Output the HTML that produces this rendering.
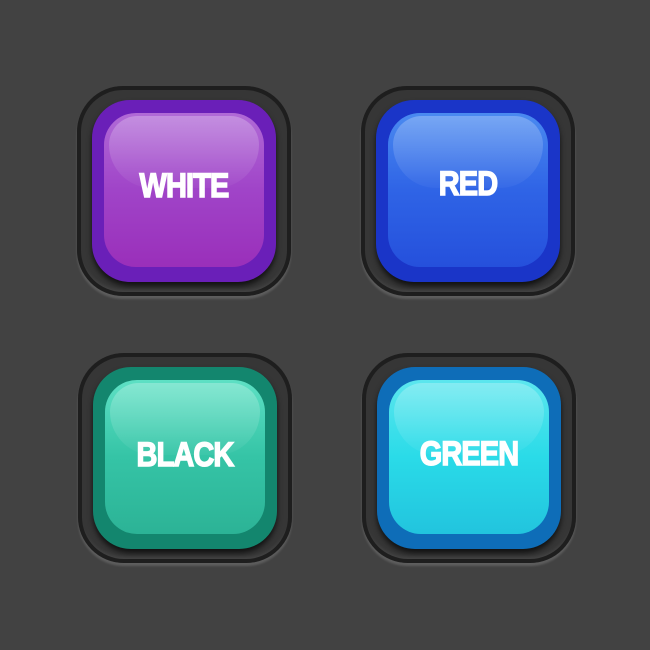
<!DOCTYPE html>
<html><head><style>
html,body{margin:0;padding:0}
body{width:650px;height:650px;background:#424242;position:relative;overflow:hidden;font-family:"Liberation Sans",sans-serif}
.h{position:absolute;width:214px;height:210px;border-radius:46px;background:#363636;box-shadow:inset 0 0 0 4px #1e1e1e,inset 0 -6px 4px rgba(255,255,255,.08),0 3px 2px rgba(255,255,255,.15)}
.b{position:absolute;left:15px;top:14px;width:184px;height:182px;border-radius:38px;box-shadow:0 4px 6px rgba(0,0,0,.7)}
.f{position:absolute;left:12px;top:13px;width:160px;height:154px;border-radius:32px}
.f:before{content:"";position:absolute;left:5px;top:3px;right:5px;height:72px;border-radius:30px 30px 45px 45px;background:linear-gradient(rgba(255,255,255,.25),rgba(255,255,255,.03))}
.t{position:absolute;left:0;right:0;top:56px;text-align:center;color:#fff;font-weight:bold;font-size:34px;letter-spacing:-1px;transform:scaleX(.85);-webkit-text-stroke:1.5px #fff}
</style></head><body>
<div class="h" style="left:77px;top:86px"><div class="b" style="background:#6a1fb8"><div class="f" style="background:linear-gradient(#b06ad6,#a044c8 50%,#9a2fba)"><div class="t" style="top:54px">WHITE</div></div></div></div>
<div class="h" style="left:361px;top:86px"><div class="b" style="background:#1a35c8"><div class="f" style="background:linear-gradient(#4a8af0,#2f64e6 50%,#2550dc)"><div class="t" style="top:52px">RED</div></div></div></div>
<div class="h" style="left:78px;top:353px"><div class="b" style="background:#13866e"><div class="f" style="background:linear-gradient(#5ee0c4,#35c4a6 50%,#2cb396)"><div class="t" style="top:56px">BLACK</div></div></div></div>
<div class="h" style="left:362px;top:353px"><div class="b" style="background:#0e6db8"><div class="f" style="background:linear-gradient(#5ce6ee,#2adbe8 50%,#22c4de)"><div class="t" style="top:55px">GREEN</div></div></div></div>
</body></html>
